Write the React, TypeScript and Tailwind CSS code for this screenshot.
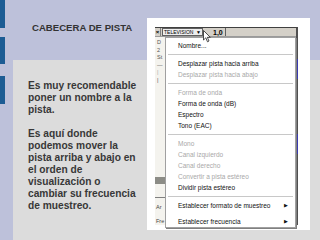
const MENU: { label: string; dim?: boolean; sep?: boolean; gap?: boolean; sub?: boolean }[] = [
  { label: "Nombre..." },
  { label: "", sep: true },
  { label: "Desplazar pista hacia arriba" },
  { label: "Desplazar pista hacia abajo", dim: true },
  { label: "", sep: true },
  { label: "Forma de onda", dim: true },
  { label: "Forma de onda (dB)" },
  { label: "Espectro" },
  { label: "Tono (EAC)" },
  { label: "", sep: true },
  { label: "Mono", dim: true },
  { label: "Canal izquierdo", dim: true },
  { label: "Canal derecho", dim: true },
  { label: "Convertir a pista estéreo", dim: true },
  { label: "Dividir pista estéreo" },
  { label: "", sep: true },
  { label: "Establecer formato de muestreo", sub: true },
  { label: "", gap: true },
  { label: "Establecer frecuencia", sub: true },
];

function TrackMenu() {
  return (
    <div className="absolute left-[10px] top-[9px] w-[131px] bg-white border border-[#a0a0a0] shadow-[1px_1px_0_#808080] pt-[2px] font-['Liberation_Sans',Arial,sans-serif] text-[6.5px]">
      {MENU.map((m, i) =>
        m.sep ? (
          <div key={i} className="mx-[2px] my-[3px] h-px bg-[#c8c8c8]" />
        ) : m.gap ? (
          <div key={i} className="h-[5px]" />
        ) : (
          <div
            key={i}
            className={`flex items-center h-[11px] pl-[12px] pr-[7px] ${m.dim ? "text-[#a8a8a8]" : "text-[#111]"}`}
          >
            <span className="flex-1">{m.label}</span>
            {m.sub && <span className="text-[5px]">▶</span>}
          </div>
        ),
      )}
    </div>
  );
}

function Screenshot() {
  return (
    <div className="absolute left-[147px] top-[18px] w-[163px] h-[212px] bg-white">
      <div className="absolute left-[8px] top-[9px] w-[143px] h-[198px] border-t border-t-[#404040] border-r-2 border-r-[#505050] bg-[#f4f3ee]">
        <div className="flex items-center h-[9px] bg-[#d4d0c8] border-b border-[#9a9a9a] text-[6px] font-['Liberation_Sans',Arial,sans-serif]">
          <span className="w-[6px] h-[8px] flex items-center justify-center border-r border-[#808080] text-[6px] font-bold leading-none">×</span>
          <span className="ml-[1px] w-[41px] h-[8px] flex items-center bg-[#eeeeee] border border-[#606060] pl-[1px] text-[5px] leading-none">
            TELEVISION<span className="ml-auto mr-[1px] text-[5px]">▼</span>
          </span>
          <span className="ml-[10px] font-bold text-[7px] leading-none">1,0</span>
          <span className="ml-[2px] h-[8px] border-r border-[#606060]" />
        </div>
        <div className="flex flex-col pl-[2px] pt-[2px] text-[5.5px] text-[#555] leading-[7.5px] font-['Liberation_Sans',Arial,sans-serif]">
          <span>D</span>
          <span>2</span>
          <span>St</span>
          <span>—</span>
          <span className="text-[#aaa]">|</span>
          <span>|</span>
        </div>
        <div className="absolute left-0 top-[149px] w-[10px] h-[7px] bg-[#8c8c86]" />
        <div className="absolute left-0 top-[169px] w-[10px] h-px bg-[#808080]" />
        <div className="absolute left-[1px] top-[172px] text-[5.5px] text-[#444] leading-[14px] font-['Liberation_Sans',Arial,sans-serif]">
          <div>Ar</div>
          <div>Fre</div>
        </div>
        <div className="absolute right-[-2px] top-[31px] w-[2px] h-[20px] bg-[#3a3ab0]" />
        <div className="absolute right-[-2px] top-[106px] w-[2px] h-[20px] bg-[#3a3ab0]" />
        <TrackMenu />
        <svg className="absolute left-[48px] top-[2px]" width="8" height="13" viewBox="0 0 8 13">
          <path d="M0.5 0.5 L0.5 10 L2.8 7.8 L4.5 11.8 L6 11 L4.3 7.3 L7.3 7.3 Z" fill="white" stroke="#222" strokeWidth="0.8" />
        </svg>
      </div>
    </div>
  );
}

export default function App() {
  return (
    <div className="relative w-[320px] h-[240px] overflow-hidden bg-[#bdc1da] font-['Liberation_Sans',Arial,sans-serif]">
      <div className="flex h-full">
        <div className="w-[13px] flex flex-col">
          <div className="w-[5px] h-[28px] bg-[#1c5c94]" />
          <div className="w-[5px] h-[27px] mt-[9px] bg-[#1c5c94]" />
          <div className="w-[5px] h-[28px] mt-[12px] bg-[#1c5c94]" />
        </div>
        <div className="flex-1 flex flex-col">
          <div className="h-[60px] pl-[19px] pt-[22px]">
            <h1 className="text-[9.6px] font-bold text-[#333] leading-[12px]">CABECERA DE PISTA</h1>
          </div>
          <div className="flex-1 bg-[#dcdcdc] pl-[15px] pt-[20px] text-[10.2px] font-bold text-[#383838] leading-[12px]">
            <p>
              Es muy recomendable<br />poner un nombre a la<br />pista.
            </p>
            <p className="mt-[12px]">
              Es aquí donde<br />podemos mover la<br />pista arriba y abajo en<br />el orden de<br />visualización o<br />cambiar su frecuencia<br />de muestreo.
            </p>
          </div>
        </div>
      </div>
      <Screenshot />
    </div>
  );
}
